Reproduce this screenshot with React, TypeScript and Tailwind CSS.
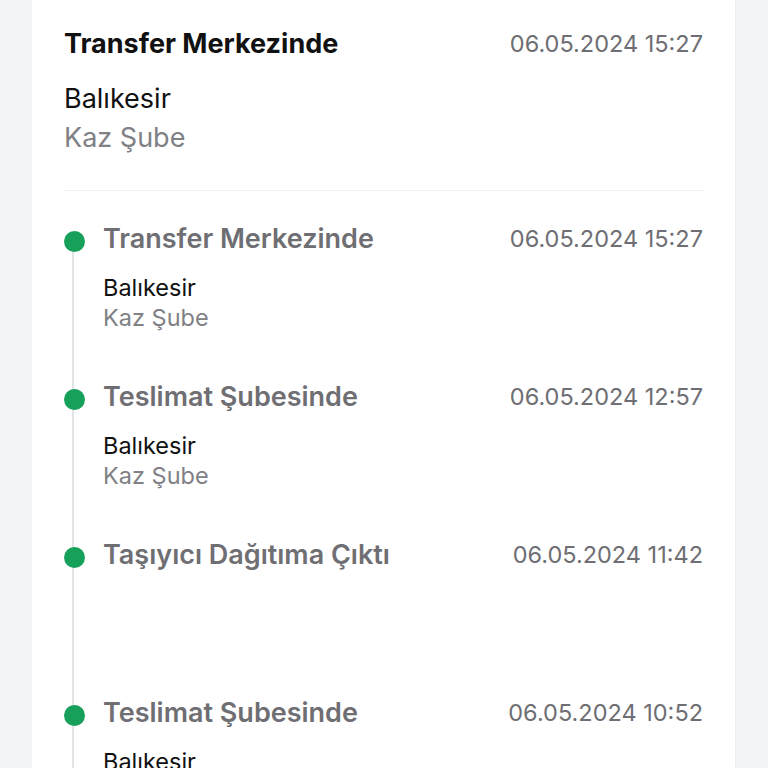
const events = [
  { title: "Transfer Merkezinde", date: "06.05.2024 15:27", city: "Balıkesir", branch: "Kaz Şube" },
  { title: "Teslimat Şubesinde", date: "06.05.2024 12:57", city: "Balıkesir", branch: "Kaz Şube" },
  { title: "Taşıyıcı Dağıtıma Çıktı", date: "06.05.2024 11:42" },
  { title: "Teslimat Şubesinde", date: "06.05.2024 10:52", city: "Balıkesir", branch: "Kaz Şube" },
];

export default function App() {
  return (
    <div
      className="h-[768px] w-[768px] overflow-hidden bg-[#f3f4f6] px-8"
      style={{ fontFamily: "Inter, 'Noto Sans', sans-serif" }}
    >
      <div className="h-full border-r border-[#eceef1] bg-white px-8 pt-[27px]">
        {/* Latest status */}
        <div className="flex items-start justify-between">
          <div className="text-[27px] font-bold leading-[34px] text-[#111111]">Transfer Merkezinde</div>
          <div className="text-[23.5px] leading-[34px] text-[#6e6e73]">06.05.2024 15:27</div>
        </div>
        <div className="mt-[18px] text-[27px] leading-[39px] text-[#111111]">Balıkesir</div>
        <div className="text-[27px] leading-[39px] text-[#808085]">Kaz Şube</div>
        <div className="mt-[33px] h-px bg-[#eeeff1]" />

        {/* History */}
        <div className="pt-[32px]">
          {events.map((e, i) => (
            <div key={i} className="relative flex h-[158px]">
              <div className="absolute left-[8px] top-[16px] h-[158px] w-[2px] bg-[#e2e3e6]" />
              <div className="relative z-10 mt-[8px] h-[21px] w-[21px] rounded-full bg-[#16a05a]" />
              <div className="ml-[18px] flex-1">
                <div className="flex items-start justify-between">
                  <div className="text-[27px] font-semibold leading-[32px] text-[#6e6e73]">{e.title}</div>
                  <div className="text-[23.5px] leading-[32px] text-[#6e6e73]">{e.date}</div>
                </div>
                {e.city && (
                  <>
                    <div className="mt-[18px] text-[23.5px] leading-[30px] text-[#111111]">{e.city}</div>
                    <div className="text-[23.5px] leading-[30px] text-[#808085]">{e.branch}</div>
                  </>
                )}
              </div>
            </div>
          ))}
        </div>
      </div>
    </div>
  );
}
